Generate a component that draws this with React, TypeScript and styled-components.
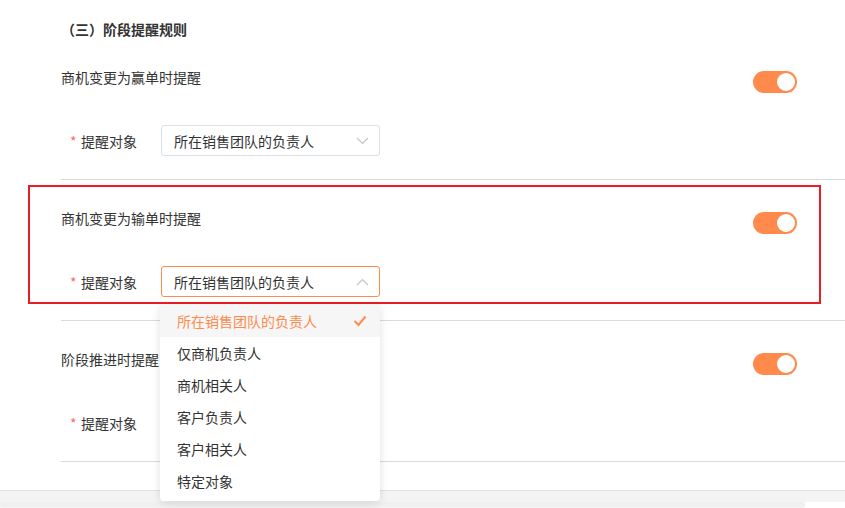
import React from "react";
import styled, { createGlobalStyle } from "styled-components";

const ORANGE = "#ff8a4c";

const GlobalStyle = createGlobalStyle`
  html, body {
    margin: 0;
    padding: 0;
    background: #ffffff;
  }
  body {
    font-family: "Noto Sans CJK SC", "Noto Sans", "Liberation Sans", sans-serif;
    font-size: 14px;
    color: #333333;
  }
  * {
    box-sizing: border-box;
  }
`;

const Page = styled.div`
  width: 845px;
  height: 508px;
  overflow: hidden;
  display: flex;
  flex-direction: column;
`;

const Heading = styled.div`
  height: 39px;
  padding: 19px 0 0 61px;
  line-height: 20px;
  font-size: 14px;
  font-weight: 700;
  color: #333333;
`;

const Section = styled.div`
  position: relative;
  margin-left: 61px;
  padding: 28px 48px 23px 0;
  border-bottom: 1px solid #dadada;
  display: flex;
  flex-direction: column;
  gap: 32px;
`;

const TitleRow = styled.div`
  display: flex;
  align-items: flex-start;
  justify-content: space-between;
  height: 26px;
`;

const Title = styled.span`
  line-height: 20px;
  font-size: 14px;
  color: #333333;
`;

const Switch = styled.div<{ $on: boolean }>`
  position: relative;
  margin-top: 4px;
  width: 44px;
  height: 22px;
  border-radius: 11px;
  background: ${(p) => (p.$on ? ORANGE : "#dcdfe6")};

  &::after {
    content: "";
    position: absolute;
    top: 2px;
    left: ${(p) => (p.$on ? "24px" : "2px")};
    width: 18px;
    height: 18px;
    border-radius: 50%;
    background: #ffffff;
  }
`;

const FormRow = styled.div`
  display: flex;
  align-items: center;
  padding-left: 9px;
  height: 31px;
`;

const Label = styled.div`
  width: 91px;
  display: flex;
  align-items: center;
  line-height: 20px;
  color: #333333;
`;

const Star = styled.span`
  display: inline-block;
  width: 11px;
  color: #f56c6c;
`;

const SelectWrap = styled.div`
  position: relative;
  width: 219px;
`;

const SelectBox = styled.div<{ $open: boolean }>`
  height: 31px;
  display: flex;
  align-items: center;
  justify-content: space-between;
  padding: 0 10px 0 12px;
  border: 1px solid ${(p) => (p.$open ? ORANGE : "#dcdfe6")};
  border-radius: 3px;
  background: #ffffff;
  color: #333333;
  line-height: 20px;
`;

const Arrow = styled.svg<{ $up: boolean }>`
  width: 13px;
  height: 8px;
  transform: ${(p) => (p.$up ? "rotate(180deg)" : "none")};
`;

const Menu = styled.ul`
  position: absolute;
  top: 39px;
  left: -1px;
  width: 220px;
  margin: 0;
  padding: 0 0 4px;
  list-style: none;
  background: #ffffff;
  border-radius: 4px;
  box-shadow: 0 2px 10px rgba(0, 0, 0, 0.12);
  z-index: 20;
`;

const MenuItem = styled.li<{ $selected: boolean }>`
  height: 32px;
  display: flex;
  align-items: center;
  justify-content: space-between;
  padding: 0 13px 0 17px;
  color: ${(p) => (p.$selected ? ORANGE : "#333333")};
  background: ${(p) => (p.$selected ? "#f6f6f6" : "transparent")};
`;

const Check = styled.svg`
  width: 14px;
  height: 12px;
`;

// red annotation frame drawn over the second rule
const Highlight = styled.div`
  position: absolute;
  left: -33px;
  top: 5px;
  width: 793px;
  height: 119px;
  border: 2px solid #ec1c24;
  pointer-events: none;
  z-index: 5;
`;

const Footer = styled.div`
  margin-top: 28px;
  border-top: 1px solid #e2e2e2;
  height: 12px;
  background: #f4f4f4;
`;

const Track = styled.div`
  flex: 1;
  padding-right: 40px;
`;

const Thumb = styled.div`
  height: 5px;
  border-radius: 0 3px 3px 0;
  background: #f0f0f0;
  box-shadow: 0 1px 2px rgba(0, 0, 0, 0.06);
`;

const OPTIONS = [
  "所在销售团队的负责人",
  "仅商机负责人",
  "商机相关人",
  "客户负责人",
  "客户相关人",
  "特定对象",
];

type Rule = { title: string; open: boolean; marked: boolean };

const rules: Rule[] = [
  { title: "商机变更为赢单时提醒", open: false, marked: false },
  { title: "商机变更为输单时提醒", open: true, marked: true },
  { title: "阶段推进时提醒", open: false, marked: false },
];

const Chevron = ({ up }: { up: boolean }) => (
  <Arrow $up={up} viewBox="0 0 13 8">
    <polyline
      points="1,1 6.5,6.5 12,1"
      fill="none"
      stroke="#c0c4cc"
      strokeWidth="1.2"
    />
  </Arrow>
);

const RuleSection = ({ rule }: { rule: Rule }) => (
  <Section>
    {rule.marked && <Highlight />}
    <TitleRow>
      <Title>{rule.title}</Title>
      <Switch $on />
    </TitleRow>
    <FormRow>
      <Label>
        <Star>*</Star>提醒对象
      </Label>
      <SelectWrap>
        <SelectBox $open={rule.open}>
          <span>{OPTIONS[0]}</span>
          <Chevron up={rule.open} />
        </SelectBox>
        {rule.open && (
          <Menu>
            {OPTIONS.map((o, i) => (
              <MenuItem key={o} $selected={i === 0}>
                <span>{o}</span>
                {i === 0 && (
                  <Check viewBox="0 0 14 12">
                    <polyline
                      points="1.5,6 5.5,10 12.5,1.5"
                      fill="none"
                      stroke={ORANGE}
                      strokeWidth="2"
                    />
                  </Check>
                )}
              </MenuItem>
            ))}
          </Menu>
        )}
      </SelectWrap>
    </FormRow>
  </Section>
);

export default function App() {
  return (
    <>
      <GlobalStyle />
      <Page>
        <Heading>（三）阶段提醒规则</Heading>
        {rules.map((r) => (
          <RuleSection key={r.title} rule={r} />
        ))}
        <Footer />
        <Track>
          <Thumb />
        </Track>
      </Page>
    </>
  );
}
